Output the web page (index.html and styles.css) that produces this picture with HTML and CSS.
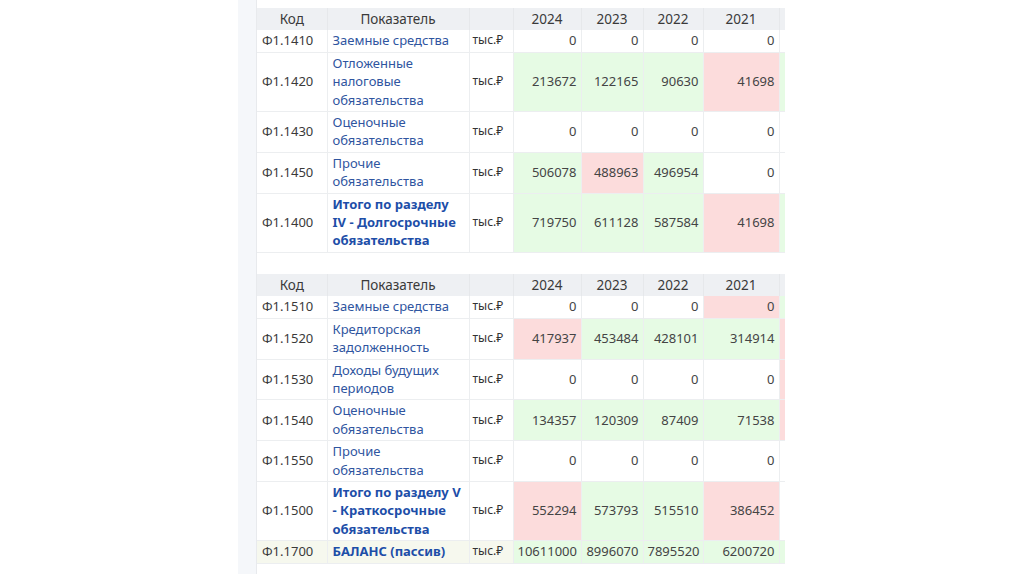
FILE: index.html
```html
<!DOCTYPE html>
<html lang="ru">
<head>
<meta charset="utf-8">
<link rel="stylesheet" href="styles.css">
</head>
<body>
<div class="page">
  <div class="strip"></div>
  <div class="sheet">
    <table class="fin">
      <colgroup>
        <col class="c-code"><col class="c-label"><col class="c-unit">
        <col class="c-y1"><col class="c-y2"><col class="c-y3"><col class="c-y4"><col class="c-y5">
      </colgroup>
      <thead>
        <tr><th>Код</th><th>Показатель</th><th></th><th>2024</th><th>2023</th><th>2022</th><th>2021</th><th></th></tr>
      </thead>
      <tbody>
        <tr><td class="code">Ф1.1410</td><td class="label">Заемные средства</td><td class="unit">тыс.₽</td><td class="num">0</td><td class="num">0</td><td class="num">0</td><td class="num">0</td><td class="num"></td></tr>
        <tr><td class="code">Ф1.1420</td><td class="label">Отложенные налоговые обязательства</td><td class="unit">тыс.₽</td><td class="num up">213672</td><td class="num up">122165</td><td class="num up">90630</td><td class="num down">41698</td><td class="num up"></td></tr>
        <tr><td class="code">Ф1.1430</td><td class="label">Оценочные обязательства</td><td class="unit">тыс.₽</td><td class="num">0</td><td class="num">0</td><td class="num">0</td><td class="num">0</td><td class="num"></td></tr>
        <tr><td class="code">Ф1.1450</td><td class="label">Прочие обязательства</td><td class="unit">тыс.₽</td><td class="num up">506078</td><td class="num down">488963</td><td class="num up">496954</td><td class="num">0</td><td class="num"></td></tr>
        <tr><td class="code">Ф1.1400</td><td class="label total">Итого по разделу IV - Долгосрочные обязательства</td><td class="unit">тыс.₽</td><td class="num up">719750</td><td class="num up">611128</td><td class="num up">587584</td><td class="num down">41698</td><td class="num up"></td></tr>
      </tbody>
    </table>

    <table class="fin">
      <colgroup>
        <col class="c-code"><col class="c-label"><col class="c-unit">
        <col class="c-y1"><col class="c-y2"><col class="c-y3"><col class="c-y4"><col class="c-y5">
      </colgroup>
      <thead>
        <tr><th>Код</th><th>Показатель</th><th></th><th>2024</th><th>2023</th><th>2022</th><th>2021</th><th></th></tr>
      </thead>
      <tbody>
        <tr><td class="code">Ф1.1510</td><td class="label">Заемные средства</td><td class="unit">тыс.₽</td><td class="num">0</td><td class="num">0</td><td class="num">0</td><td class="num down">0</td><td class="num up"></td></tr>
        <tr><td class="code">Ф1.1520</td><td class="label">Кредиторская задолженность</td><td class="unit">тыс.₽</td><td class="num down">417937</td><td class="num up">453484</td><td class="num up">428101</td><td class="num up">314914</td><td class="num down"></td></tr>
        <tr><td class="code">Ф1.1530</td><td class="label">Доходы будущих периодов</td><td class="unit">тыс.₽</td><td class="num">0</td><td class="num">0</td><td class="num">0</td><td class="num">0</td><td class="num down"></td></tr>
        <tr><td class="code">Ф1.1540</td><td class="label">Оценочные обязательства</td><td class="unit">тыс.₽</td><td class="num up">134357</td><td class="num up">120309</td><td class="num up">87409</td><td class="num up">71538</td><td class="num down"></td></tr>
        <tr><td class="code">Ф1.1550</td><td class="label">Прочие обязательства</td><td class="unit">тыс.₽</td><td class="num">0</td><td class="num">0</td><td class="num">0</td><td class="num">0</td><td class="num"></td></tr>
        <tr><td class="code">Ф1.1500</td><td class="label total">Итого по разделу V - Краткосрочные обязательства</td><td class="unit">тыс.₽</td><td class="num down">552294</td><td class="num up">573793</td><td class="num up">515510</td><td class="num down">386452</td><td class="num"></td></tr>
        <tr class="balance"><td class="code">Ф1.1700</td><td class="label total">БАЛАНС (пассив)</td><td class="unit">тыс.₽</td><td class="num up">10611000</td><td class="num up">8996070</td><td class="num up">7895520</td><td class="num up">6200720</td><td class="num up"></td></tr>
      </tbody>
    </table>
  </div>
</div>
</body>
</html>
```

FILE: styles.css
```css
html, body {
  margin: 0;
  padding: 0;
  background: #ffffff;
}
.page {
  display: flex;
  height: 574px;
  overflow: hidden;
  padding-left: 238px;
}
.strip {
  width: 18px;
  background: #f5f7fa;
  border-right: 1px solid #e8eaed;
  flex: none;
}
.sheet {
  width: 528px;
  overflow: hidden;
  padding-top: 8px;
  display: flex;
  flex-direction: column;
  gap: 21px;
}
.fin {
  table-layout: fixed;
  border-collapse: collapse;
  width: 600px;
  font-family: "Noto Sans", "Open Sans", sans-serif;
  font-size: 13px;
  line-height: 18.4px;
  color: #3a3a3a;
}
.c-code { width: 70px; }
.c-label { width: 142px; }
.c-unit { width: 44px; }
.c-y1 { width: 68px; }
.c-y2 { width: 62px; }
.c-y3 { width: 60px; }
.c-y4 { width: 76px; }
.c-y5 { width: 98px; }
.fin th {
  background: #eef0f3;
  font-weight: normal;
  font-size: 13.5px;
  text-align: center;
  padding: 2px 4px 2px;
  color: #3a3a3a;
  border-left: 1px solid #e6e8eb;
}
.fin th:first-child { border-left: none; }
.fin td {
  padding: 1px 4px 2px;
  border-bottom: 1px solid #eceef0;
  border-left: 1px solid #eceef0;
  vertical-align: middle;
}
.fin td.code {
  border-left: none;
  padding-left: 5px;
  white-space: nowrap;
}
.fin td.label {
  color: #2f55a0;
  padding-left: 5px;
}
.fin td.label.total {
  color: #1d4ea8;
  font-weight: bold;
}
.fin td.unit {
  font-size: 12px;
  white-space: nowrap;
  padding-left: 3px;
  color: #333;
}
.fin td.num {
  text-align: right;
  white-space: nowrap;
  color: #444;
  padding-right: 4px;
}
.fin td.up { background: #e6fbe4; }
.fin td.down { background: #fcdcdc; }
.fin tr.balance td.code,
.fin tr.balance td.label,
.fin tr.balance td.unit { background: #f6f8ee; }
```
